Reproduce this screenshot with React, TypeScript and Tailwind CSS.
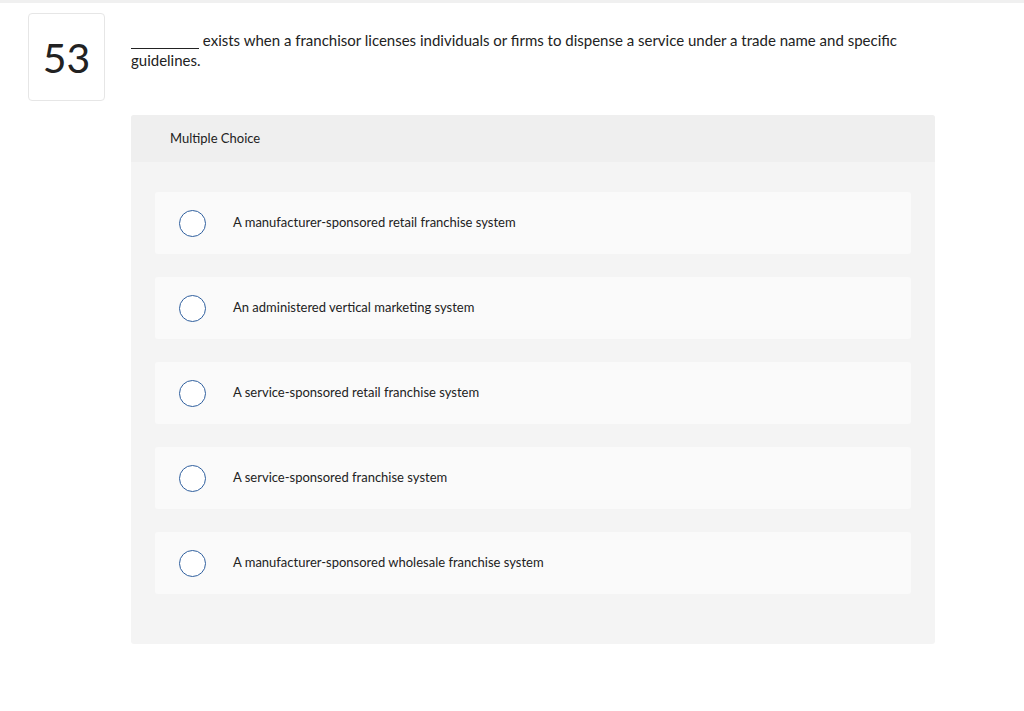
import React from "react";

const options = [
  "A manufacturer-sponsored retail franchise system",
  "An administered vertical marketing system",
  "A service-sponsored retail franchise system",
  "A service-sponsored franchise system",
  "A manufacturer-sponsored wholesale franchise system",
];

export default function App() {
  return (
    <div className="min-h-[711px] w-[1024px] bg-white text-[#1a1a1a]" style={{ fontFamily: "Lato, 'Open Sans', sans-serif" }}>
      <div className="h-[3px] w-full bg-[#f0f0f0]" />
      <div className="flex pl-[28px] pt-[10px]">
        <div className="flex h-[88px] w-[77px] shrink-0 items-center justify-center rounded-[4px] border border-[#e6e6e6] text-[41px] leading-none text-[#222]">
          53
        </div>
        <div className="ml-[26px] w-[804px]">
          <p className="pt-[17px] text-[15px] leading-[20px] text-[#222]">
            <span className="inline-block w-[68px] border-b border-[#222] align-baseline leading-[15px]">&nbsp;</span>{" "}
            exists when a franchisor licenses individuals or firms to dispense a service under a trade name and specific guidelines.
          </p>
          <div className="mt-[45px] rounded-[3px] bg-[#f4f4f4]">
            <div className="flex h-[47px] items-center rounded-t-[3px] bg-[#efefef] pl-[39px] text-[13px] text-[#222]">
              Multiple Choice
            </div>
            <div className="flex flex-col gap-[23px] px-[24px] pb-[50px] pt-[30px]">
              {options.map((o) => (
                <div key={o} className="flex h-[62px] items-center rounded-[3px] bg-[#fafafa]">
                  <div className="ml-[24px] h-[27px] w-[27px] rounded-full border-[1.5px] border-[#2f5f9e] bg-white" />
                  <span className="ml-[27px] text-[13px] text-[#222]">{o}</span>
                </div>
              ))}
            </div>
          </div>
        </div>
      </div>
    </div>
  );
}
